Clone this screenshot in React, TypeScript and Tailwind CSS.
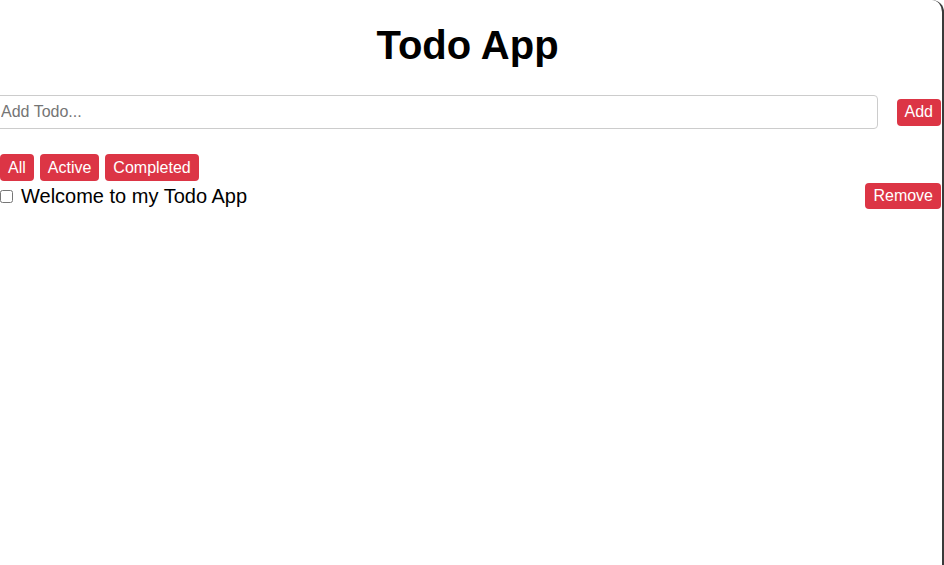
import React, { useState } from "react";

type Filter = "all" | "active" | "completed";

interface Todo {
  id: number;
  text: string;
  done: boolean;
}

const App: React.FC = () => {
  const [todos, setTodos] = useState<Todo[]>([
    { id: 1, text: "Welcome to my Todo App", done: false },
  ]);
  const [input, setInput] = useState("");
  const [filter, setFilter] = useState<Filter>("all");

  const addTodo = (e: React.FormEvent) => {
    e.preventDefault();
    if (!input.trim()) return;
    setTodos([...todos, { id: Date.now(), text: input.trim(), done: false }]);
    setInput("");
  };

  const visible = todos.filter((t) =>
    filter === "all" ? true : filter === "active" ? !t.done : t.done
  );

  const btn =
    "h-[27px] rounded-[4px] bg-[#dc3545] px-[8px] text-[16px] leading-[18px] text-white";

  return (
    <div className="h-[565px] w-[944px] overflow-hidden rounded-tr-[12px] border-r-2 border-[#3a3a3a] bg-white font-['Liberation_Sans',Arial,sans-serif] text-black">
      <div className="-ml-[6px] w-[948px] pr-[1px]">
        <h1 className="pt-[22px] text-center text-[40px] font-bold leading-[46px]">
          Todo App
        </h1>

        {/* Add form */}
        <form onSubmit={addTodo} className="mt-[27px] flex items-center">
          <input
            value={input}
            onChange={(e) => setInput(e.target.value)}
            placeholder="Add Todo..."
            className="h-[34px] flex-1 rounded-[4px] border border-[#cccccc] px-[6px] text-[16px] placeholder:text-[#757575] focus:outline-none"
          />
          <button type="submit" className={`${btn} ml-[19px]`}>
            Add
          </button>
        </form>

        {/* Filters */}
        <div className="mt-[25px] flex gap-[6px] pl-[6px]">
          <button className={btn} onClick={() => setFilter("all")}>
            All
          </button>
          <button className={btn} onClick={() => setFilter("active")}>
            Active
          </button>
          <button className={btn} onClick={() => setFilter("completed")}>
            Completed
          </button>
        </div>

        {/* Todo list */}
        <ul className="mt-[2px] pl-[6px]">
          {visible.map((todo) => (
            <li key={todo.id} className="flex h-[26px] items-center">
              <input
                type="checkbox"
                checked={todo.done}
                onChange={() =>
                  setTodos(
                    todos.map((t) =>
                      t.id === todo.id ? { ...t, done: !t.done } : t
                    )
                  )
                }
                className="m-0 mr-[8px] h-[13px] w-[13px]"
              />
              <span className="flex-1 text-[20px] leading-[23px]">
                {todo.text}
              </span>
              <button
                className="h-[26px] rounded-[4px] bg-[#dc3545] px-[8px] text-[16px] leading-[18px] text-white"
                onClick={() => setTodos(todos.filter((t) => t.id !== todo.id))}
              >
                Remove
              </button>
            </li>
          ))}
        </ul>
      </div>
    </div>
  );
};

export default App;
